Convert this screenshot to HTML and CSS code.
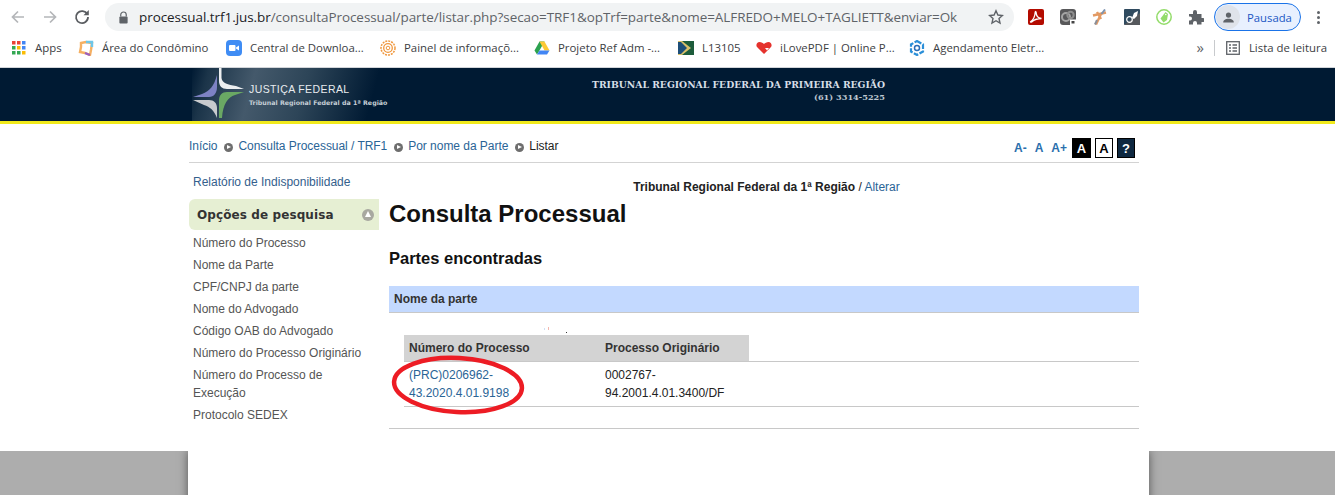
FILE: index.html
```html
<!DOCTYPE html>
<html lang="pt-BR">
<head>
<meta charset="utf-8">
<title>Consulta Processual</title>
<link rel="stylesheet" href="styles.css">
</head>
<body>
<div class="toolbar">
  <svg class="nav-ico" viewBox="0 0 16 16"><path d="M14 8H3M8 2.500 2.500 8 8 13.500" fill="none" stroke="#b4b6b9" stroke-width="1.700"/></svg>
  <svg class="nav-ico" viewBox="0 0 16 16"><path d="M2 8h11M8 2.500 13.500 8 8 13.500" fill="none" stroke="#b4b6b9" stroke-width="1.700"/></svg>
  <svg class="nav-ico" viewBox="0 0 16 16"><path d="M13.300 5.300A6 6 0 1 0 14 8" fill="none" stroke="#5a5d61" stroke-width="1.800"/><path d="M9.500 6.300h5.300V1z" fill="#5a5d61"/></svg>
  <div class="omnibox">
    <svg class="lock" viewBox="0 0 12 14"><path d="M3 6V4a3 3 0 0 1 6 0v2" fill="none" stroke="#5f6368" stroke-width="1.300"/><rect x="1.500" y="6" width="9" height="7.500" rx="1" fill="#5f6368"/></svg>
    <span class="url"><span class="url-host">processual.trf1.jus.br</span>/consultaProcessual/parte/listar.php?secao=TRF1&amp;opTrf=parte&amp;nome=ALFREDO+MELO+TAGLIETT&amp;enviar=Ok</span>
    <svg class="star" viewBox="0 0 16 16"><path d="m8 1.800 1.900 4.200 4.500.5-3.400 3 1 4.500L8 11.700 4 14l1-4.500-3.400-3 4.500-.5z" fill="none" stroke="#5f6368" stroke-width="1.400"/></svg>
  </div>
  <div class="ext-row">
    <svg class="ext" viewBox="0 0 16 16"><rect width="16" height="16" rx="2" fill="#b30b00"/><path d="M2.500 12.800C5 11 7 7 7.200 3.200c.1-1 .9-.8.9 0 0 3 2 5.800 5.400 6.300-3.500 0-7 1-9 2.800-1 1-2 1-2 .5z" fill="none" stroke="#fff" stroke-width="1.300"/></svg>
    <svg class="ext" viewBox="0 0 16 16"><rect width="16" height="16" rx="3" fill="#58585a"/><circle cx="6" cy="8" r="4" fill="none" stroke="#a5a5a5" stroke-width="2"/><circle cx="10.500" cy="6" r="3.200" fill="none" stroke="#8f8f8f" stroke-width="2"/><rect x="10" y="10.500" width="6" height="5.500" fill="#fff"/><rect x="11.500" y="12" width="3" height="2.500" fill="#444"/></svg>
    <svg class="ext" viewBox="0 0 16 16"><path d="M4 15.500 9.500 4M5 3l4 7M1 6.500l13-3" stroke="#e39a63" stroke-width="2.400" fill="none"/><path d="M9.500 5 13 .5" stroke="#7c93b0" stroke-width="2"/><path d="M3 15.500 5 11" stroke="#8a8f98" stroke-width="2"/></svg>
    <svg class="ext" viewBox="0 0 16 16"><rect width="16" height="16" rx="1" fill="#2f4a5f"/><path d="M0 16 16 4v12z" fill="#55585c"/><circle cx="5.500" cy="10.500" r="2.800" fill="none" stroke="#fff" stroke-width="1.200"/><path d="M8 9l2-5 4-2-1 5-3 3z" fill="#fff"/></svg>
    <svg class="ext" viewBox="0 0 16 16"><circle cx="8" cy="8" r="7.200" fill="#fff" stroke="#93dc6a" stroke-width="1.500"/><path d="M4.500 9.500 9.500 3l2.500 2-1 6-3.500 2.500z" fill="#93dc6a"/><circle cx="9.800" cy="5.500" r=".8" fill="#fff"/></svg>
    <svg class="ext" viewBox="0 0 16 16"><path d="M1 5h4V3a2 2 0 0 1 4 0v2h4.500v4h1.500a2 2 0 0 1 0 4h-1.500v2.500H9v-1.500a2 2 0 0 0-4 0v1.500H1v-4h1a2 2 0 0 0 0-4H1z" fill="#5f6368"/></svg>
  </div>
  <div class="profile">
    <span class="avatar"><svg class="avatar-ico" viewBox="0 0 16 16"><circle cx="8" cy="5" r="3.200" fill="#5f6368"/><path d="M1.500 14c0-3 3-4.500 6.500-4.500s6.500 1.500 6.500 4.500z" fill="#5f6368"/></svg></span>
    <span class="profile-label">Pausada</span>
  </div>
  <div class="dots"><i></i><i></i><i></i></div>
</div>

<div class="bookmarks">
  <div class="bm-list">
    <div class="bm"><svg class="bm-ico bm-apps" viewBox="0 0 14 14"><rect width="3.500" height="3.500" fill="#ea4335"/><rect x="5" width="3.500" height="3.500" fill="#ea4335"/><rect x="10" width="3.500" height="3.500" fill="#4285f4"/><rect y="5" width="3.500" height="3.500" fill="#34a853"/><rect x="5" y="5" width="3.500" height="3.500" fill="#fbbc04"/><rect x="10" y="5" width="3.500" height="3.500" fill="#4285f4"/><rect y="10" width="3.500" height="3.500" fill="#34a853"/><rect x="5" y="10" width="3.500" height="3.500" fill="#34a853"/><rect x="10" y="10" width="3.500" height="3.500" fill="#fbbc04"/></svg><span>Apps</span></div>
    <div class="bm"><svg class="bm-ico" viewBox="0 0 16 16"><path d="M3 3 8 2l6 1-1 7-1 5-5-2-5-1 1-5z" fill="none" stroke="#f5b062" stroke-width="2.400"/><path d="M8 2h6v5" fill="none" stroke="#6ec6e8" stroke-width="2.400"/><path d="M12 15 7 13" stroke="#9a5fc0" stroke-width="2.400"/></svg><span>Área do Condômino</span></div>
    <div class="bm"><svg class="bm-ico" viewBox="0 0 16 16"><rect width="16" height="16" rx="4" fill="#3f8cf4"/><rect x="3" y="5" width="6.500" height="6" rx="1" fill="#fff"/><path d="m10 7.500 3-2v5l-3-2z" fill="#fff"/></svg><span>Central de Downloa...</span></div>
    <div class="bm"><svg class="bm-ico" viewBox="0 0 16 16"><g fill="none" stroke="#f0983e"><circle cx="8" cy="8" r="7" stroke-width="1.500" stroke-dasharray="2 1"/><circle cx="8" cy="8" r="4.300" stroke-width="1.300"/><circle cx="8" cy="8" r="1.800"/></g></svg><span>Painel de informaçõ...</span></div>
    <div class="bm"><svg class="bm-ico" viewBox="0 0 16 16"><path d="M5.500 1.500h5L5.500 10.500 3 14.500.5 10.500z" fill="#2ca24f"/><path d="M5.500 1.500h5l5 9h-5z" fill="#fcc934"/><path d="M3 14.500h10l2.500-4H5.500z" fill="#4285f4"/></svg><span>Projeto Ref Adm -...</span></div>
    <div class="bm"><svg class="bm-ico" viewBox="0 0 16 16"><rect y="1" width="16" height="14" fill="#1d5c3b"/><path d="M0 1h4l9 7-9 7H0z" fill="#d9c06a"/><path d="M0 2h3l6 6-6 6H0z" fill="#1d4e78"/></svg><span>L13105</span></div>
    <div class="bm"><svg class="bm-ico" viewBox="0 0 16 16"><path d="M8 14 1 7c-1.500-2 0-5 2.500-5C5.500 2 7 3 8 4c1-1 2.500-2 4.500-2C15 2 16.500 5 15 7z" fill="#e5322d"/><path d="M9 8h4l-2 2.500z" fill="#fff"/></svg><span>iLovePDF | Online P...</span></div>
    <div class="bm"><svg class="bm-ico" viewBox="0 0 16 16"><path d="M8 1 14 4.500v7L8 15 2 11.500v-7z" fill="none" stroke="#2b8fd8" stroke-width="2.200" stroke-dasharray="5 1.500"/><circle cx="8" cy="8" r="2.500" fill="none" stroke="#2b6fb8" stroke-width="1.500"/></svg><span>Agendamento Eletr...</span></div>
  </div>
  <div class="bm-right">
    <span class="chev">»</span>
    <span class="bm-sep"></span>
    <svg class="reading" viewBox="0 0 14 14"><rect x=".7" y=".7" width="12.600" height="12.600" fill="none" stroke="#5f6368" stroke-width="1.300"/><path d="M3 4h2M6.500 4H11M3 7h2M6.500 7H11M3 10h2M6.500 10H11" stroke="#5f6368" stroke-width="1.300"/></svg>
    <span class="reading-label">Lista de leitura</span>
  </div>
</div>

<header class="site-header">
  <div class="header-inner">
    <div class="logo">
      <svg class="logo-mark" viewBox="0 0 60 52">
        <path d="M27 0h2.500v10C30 15 36 17 44 18l8 3H35c-5 0-8-3-8-8z" fill="#eceef0"/>
        <path d="M25 7v12c0 6-3 10-8 10H1l9-3c8-3 12-8 15-19z" fill="#7d82c4"/>
        <path d="M1 32h16c5 0 8 3 8 8v10c-3-8-7-11-13-13z" fill="#c9cbce"/>
        <path d="m52 24-9 3c-7 2-12 9-13 23h-3V33c0-6 3-9 8-9z" fill="#6aa864"/>
      </svg>
      <div class="logo-text">
        <div class="logo-title">JUSTIÇA FEDERAL</div>
        <div class="logo-sub">Tribunal Regional Federal da 1ª Região</div>
      </div>
    </div>
    <div class="header-title">
      <div class="ht-main">TRIBUNAL REGIONAL FEDERAL DA PRIMEIRA REGIÃO</div>
      <div class="ht-phone">(61) 3314-5225</div>
    </div>
  </div>
</header>

<main class="page">
  <div class="crumbbar">
    <nav class="crumbs">
      <a>Início</a><i class="sep"></i><a>Consulta Processual / TRF1</a><i class="sep"></i><a>Por nome da Parte</a><i class="sep"></i><span>Listar</span>
    </nav>
    <div class="a11y">
      <a>A-</a><a>A</a><a>A+</a>
      <span class="box box-black">A</span><span class="box box-white">A</span><span class="box box-navy">?</span>
    </div>
  </div>
  <div class="columns">
    <aside class="side">
      <a class="side-top">Relatório de Indisponibilidade</a>
      <div class="side-head"><span>Opções de pesquisa</span><i class="up"></i></div>
      <ul class="side-list">
        <li>Número do Processo</li>
        <li>Nome da Parte</li>
        <li>CPF/CNPJ da parte</li>
        <li>Nome do Advogado</li>
        <li>Código OAB do Advogado</li>
        <li>Número do Processo Originário</li>
        <li>Número do Processo de Execução</li>
        <li>Protocolo SEDEX</li>
      </ul>
    </aside>
    <section class="content">
      <p class="trib"><b>Tribunal Regional Federal da 1ª Região</b> / <a>Alterar</a></p>
      <h1>Consulta Processual</h1>
      <h2>Partes encontradas</h2>
      <div class="party-head">Nome da parte</div>
      <div class="party-body">
        <i class="speck speck-a"></i><i class="speck speck-b"></i><i class="speck speck-c"></i>
        <div class="proc-table">
          <div class="proc-head"><div class="c1">Número do Processo</div><div class="c2">Processo Originário</div></div>
          <div class="proc-row">
            <div class="c1"><a>(PRC)0206962-43.2020.4.01.9198</a></div>
            <div class="c2">0002767-94.2001.4.01.3400/DF</div>
            <svg class="circle" viewBox="0 0 134 62"><ellipse cx="67" cy="31" rx="64" ry="27" transform="rotate(3 67 31)" fill="none" stroke="#ed1c24" stroke-width="4.500"/></svg>
          </div>
        </div>
      </div>
    </section>
  </div>
</main>
<footer class="foot"><div class="foot-inner"></div></footer>
</body>
</html>
```
FILE: styles.css
```css
* { box-sizing: border-box; }
html, body { margin: 0; padding: 0; }
body { width: 1335px; height: 495px; overflow: hidden; background: #fff; font-family: "Liberation Sans", Arial, sans-serif; font-size: 12px; }
a { color: #2a6496; text-decoration: none; }

.toolbar { display: flex; align-items: center; height: 34px; padding-left: 10px; font-family: "Open Sans", sans-serif; }
.nav-ico { width: 16px; height: 16px; margin-right: 16px; flex: none; }
.nav-ico:nth-child(3) { margin-right: 15px; }
.omnibox { display: flex; align-items: center; width: 909px; height: 28px; border-radius: 14px; background: #f1f3f4; padding-left: 13px; flex: none; }
.lock { width: 11px; height: 13px; flex: none; }
.url { margin-left: 10px; font-size: 13.470px; color: #5f6368; white-space: nowrap; flex: 1; letter-spacing: -.05px; }
.url-host { color: #202124; }
.star { width: 16px; height: 16px; margin-right: 10px; flex: none; }
.ext-row { display: flex; gap: 16px; margin-left: 14px; flex: none; }
.ext { width: 16px; height: 16px; }
.profile { display: flex; align-items: center; width: 87px; height: 28px; margin-left: 10px; border: 1px solid #1a73e8; border-radius: 14px; background: #e8f0fe; flex: none; overflow: hidden; }
.avatar { display: flex; align-items: center; justify-content: center; width: 24px; height: 24px; margin-left: 1px; border-radius: 50%; background: #dfe3ea; }
.avatar-ico { width: 13px; height: 13px; }
.profile-label { margin-left: 7px; font-size: 11.300px; color: #1a56c4; }
.dots { display: flex; flex-direction: column; gap: 2px; margin-left: 16px; }
.dots i { width: 3px; height: 3px; border-radius: 50%; background: #5f6368; }

.bookmarks { display: flex; align-items: center; height: 34px; padding: 0 8px 6px 12px; border-bottom: 1px solid #d2d5d9; font-family: "Open Sans", sans-serif; font-size: 11.400px; color: #3c4043; }
.bm-list { display: grid; grid-template-columns: 66px 148px 154px 154px 144px 78px 153px 230px; }
.bm { display: flex; align-items: center; white-space: nowrap; }
.bm-ico { width: 16px; height: 16px; margin-right: 8px; flex: none; }
.bm-apps { width: 14px; height: 14px; margin-right: 9px; }
.bm-right { display: flex; align-items: center; margin-left: auto; }
.chev { color: #5f6368; font-size: 15px; line-height: 1; }
.bm-sep { width: 1px; height: 16px; margin: 0 11px 0 10px; background: #c8cacd; }
.reading { width: 14px; height: 14px; }
.reading-label { margin-left: 9px; }

.site-header { height: 56px; background: #001a33; border-bottom: 3px solid #f1ea1d; }
.header-inner { display: flex; width: 950px; height: 53px; margin-left: 189px; }
.logo { display: flex; align-items: flex-start; width: 200px; margin-left: 3px; background: linear-gradient(105deg, #001a33 0, #1b3449 8%, #44596b 30%, #2d4558 55%, #001a33 88%); color: #e8ecef; flex: none; }
.logo-mark { width: 60px; height: 52px; flex: none; }
.logo-text { margin: 15px 0 0 -3px; }
.logo-title { font-size: 10.500px; letter-spacing: .4px; line-height: 13px; white-space: nowrap; }
.logo-sub { margin-top: 1px; font-family: "DejaVu Sans", sans-serif; font-size: 6.300px; font-weight: bold; line-height: 11px; color: #c5ced5; white-space: nowrap; }
.header-title { width: 293px; margin: 10px 0 0 200px; font-family: "DejaVu Serif", serif; font-weight: bold; color: #d6dee6; text-align: right; white-space: nowrap; flex: none; }
.ht-main { font-size: 9.250px; line-height: 13px; }
.ht-phone { font-size: 8.200px; line-height: 13px; color: #bcc6cf; }

.page { height: 327px; }
.crumbbar { display: flex; align-items: center; justify-content: space-between; width: 950px; height: 39px; margin-left: 189px; padding: 6px 4px 0 0; border-bottom: 1px solid #d3d3d3; }
.crumbs { display: flex; align-items: center; color: #222; letter-spacing: -.04px; }
.sep { width: 9px; height: 9px; margin: 3px 5px 0 7px; border-radius: 50%; background: #6e6e6e; position: relative; }
.sep::after { content: ""; position: absolute; left: 3px; top: 2px; border-left: 4px solid #fff; border-top: 2.500px solid transparent; border-bottom: 2.500px solid transparent; }
.a11y { display: flex; align-items: center; margin-top: 4px; font-weight: bold; }
.a11y a { margin-right: 8px; font-size: 12px; color: #2a6fad; }
.a11y a:nth-child(3) { margin-right: 5px; }
.box { display: flex; align-items: center; justify-content: center; width: 18px; height: 20px; margin-right: 4px; border: 1px solid #000; font-size: 13px; }
.box:last-child { margin-right: 0; }
.box-black { width: 19px; background: #000; color: #fff; }
.box-white { background: #fff; color: #000; }
.box-navy { background: #0e2840; color: #fff; }

.columns { display: flex; width: 950px; margin-left: 189px; }
.side { width: 190px; flex: none; color: #555; }
.side-top { display: block; margin: 11px 0 0 4px; line-height: 16px; color: #34608c; }
.side-head { display: flex; align-items: center; justify-content: space-between; height: 31px; margin-top: 9px; padding: 0 5px 0 8px; border-radius: 6px 0 0 6px; background: #e6efd3; font-family: "DejaVu Sans", sans-serif; font-size: 12px; font-weight: bold; letter-spacing: .1px; color: #333; }
.up { width: 12px; height: 12px; border-radius: 50%; background: #a8a8a0; position: relative; }
.up::after { content: ""; position: absolute; left: 2.500px; top: 2.500px; border-bottom: 6px solid #fff; border-left: 3.500px solid transparent; border-right: 3.500px solid transparent; }
.side-list { list-style: none; margin: 2px 0 0; padding: 0 0 0 4px; }
.side-list li { padding: 2px 12px 2px 0; line-height: 18px; color: #555; }
.content { width: 750px; margin-left: 10px; flex: none; }
.trib { margin: 17px 0 0; padding-left: 5px; line-height: 14px; text-align: center; font-size: 12px; color: #222; }
.trib b { font-weight: bold; }
h1 { margin: 5px 0 0; font-size: 24px; font-weight: bold; line-height: 30px; color: #111; }
h2 { margin: 19px 0 0; font-size: 16.500px; font-weight: bold; line-height: 20px; color: #111; }
.party-head { height: 27px; margin-top: 18px; padding-left: 5px; background: #c3d9ff; border-bottom: 1px solid #c8c8c8; font-weight: bold; line-height: 27px; color: #333; }
.party-body { height: 116px; padding: 22px 0 0 15px; border-bottom: 1px solid #c8c8c8; position: relative; }
.speck { position: absolute; width: 1px; }
.speck-a { left: 155px; top: 15px; height: 2px; background: #cfe0f5; }
.speck-b { left: 159px; top: 14px; height: 3px; background: #f3b7ae; }
.speck-c { left: 177px; top: 19px; height: 1px; background: #333; }
.proc-table { width: 735px; }
.proc-head { display: flex; width: 345px; height: 26px; background: #d3d3d3; font-weight: bold; line-height: 26px; color: #333; }
.c1 { width: 201px; padding-left: 5px; flex: none; }
.c2 { width: 140px; flex: none; }
.proc-row { display: flex; height: 46px; padding-top: 4px; border-top: 1px solid #c8c8c8; border-bottom: 1px solid #c8c8c8; line-height: 18px; color: #222; position: relative; }
.proc-row .c1 { width: 130px; margin-right: 71px; overflow-wrap: anywhere; }
.circle { position: absolute; left: -13px; top: -8px; width: 134px; height: 62px; pointer-events: none; }

.foot { height: 44px; background: #adadad; overflow: hidden; }
.foot-inner { width: 961px; height: 60px; margin-left: 188px; background: #fff; box-shadow: 0 0 9px rgba(0,0,0,.5); }
```
